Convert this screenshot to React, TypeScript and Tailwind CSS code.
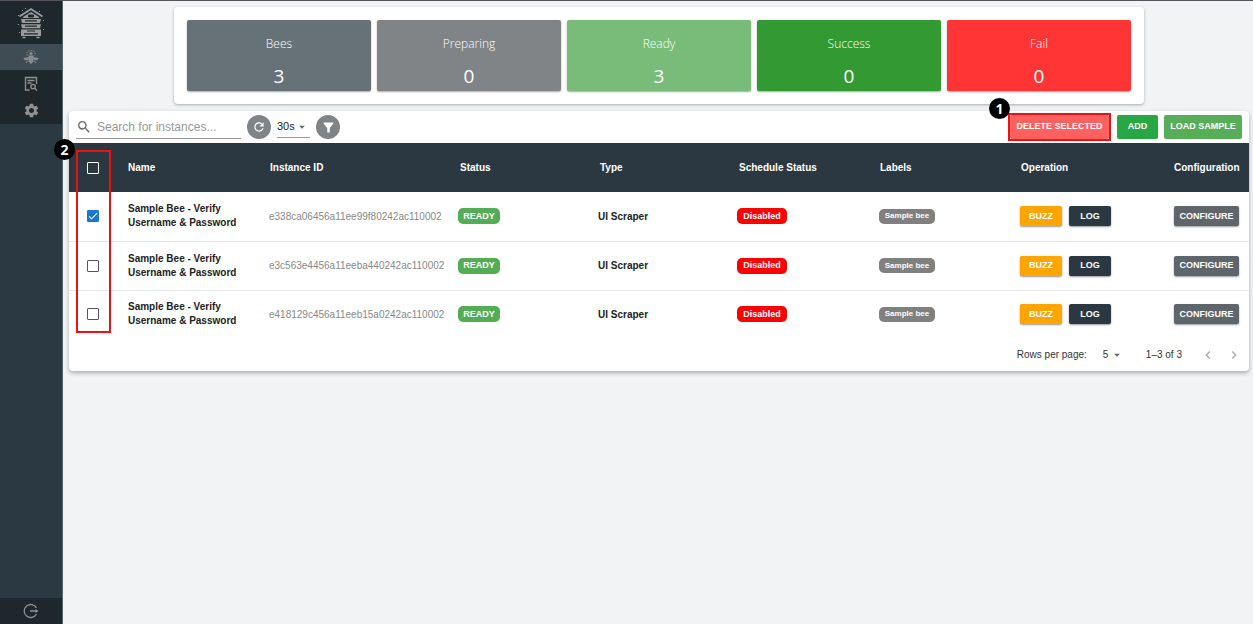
import { useState } from "react";
import {
  MdArrowDropDown,
  MdCheck,
  MdChevronLeft,
  MdChevronRight,
  MdFilterAlt,
  MdRefresh,
  MdSearch,
  MdSettings,
} from "react-icons/md";

const stats = [
  { label: "Bees", value: 3, color: "bg-[#677278]" },
  { label: "Preparing", value: 0, color: "bg-[#808487]" },
  { label: "Ready", value: 3, color: "bg-[#79bc7a]" },
  { label: "Success", value: 0, color: "bg-[#339933]" },
  { label: "Fail", value: 0, color: "bg-[#ff3434]" },
];

const instances = [
  "e338ca06456a11ee99f80242ac110002",
  "e3c563e4456a11eeba440242ac110002",
  "e418129c456a11eeb15a0242ac110002",
];

const columns = [
  "Name",
  "Instance ID",
  "Status",
  "Type",
  "Schedule Status",
  "Labels",
  "Operation",
  "Configuration",
];

const HiveLogo = () => (
  <svg width="28" height="32" viewBox="0 0 28 32" fill="none" stroke="#9a9c9d">
    <path d="M2.500 9.500 14 2l11.500 7.500" strokeWidth="1.800" />
    <path d="M6 10 14 5l8 5v1H6z" fill="#9a9c9d" stroke="none" />
    <path d="M11.500 8h5v2h-5z" fill="#1e282c" stroke="#1e282c" strokeWidth="1" />
    <path d="M4 12h20l-1 4H5zM4 17.300h20l-1 4H5zM4 22.600h20V29H4z" fill="#9a9c9d" stroke="none" />
    <path d="M8 13.800h12M8 19.200h12M7 26.800h14" stroke="#1e282c" strokeWidth="1.200" />
    <path d="M10 24h8" stroke="#1e282c" strokeWidth="1" />
    <path d="M5.500 30.500h3M19.500 30.500h3" strokeWidth="1.400" />
    <path
      d="M5 3.500h1M8 1.500h1M22 4.500h1M1 8.500h1M1 17.500h1M2 25.500h1M26 13.500h1M26 22.500h1"
      strokeWidth="1"
    />
  </svg>
);

const BeeIcon = () => (
  <svg width="16" height="16" viewBox="0 0 16 16" fill="none" stroke="#888d91">
    <path d="M4.500 6.500C2.500 3.500 5 2 8 1.500c3 .5 5.500 2 3.500 5" strokeDasharray="1.500 1" />
    <circle cx="8" cy="4.500" r="1.500" fill="#888d91" stroke="none" />
    <path d="M5.500 6.500h5v6L8 15l-2.500-2.500z" fill="#888d91" stroke="none" />
    <path d="M6 8 .5 9c.5 2.500 3 3 5 1.500zM10 8l5.500 1c-.5 2.500-3 3-5 1.500z" fill="#888d91" stroke="none" />
    <path d="M4.500 12 3 14M11.500 12l1.500 2" />
  </svg>
);

const ReportIcon = () => (
  <svg width="14" height="16" viewBox="0 0 14 16" fill="none" stroke="#8f9293" strokeWidth="1.300">
    <path d="M5.500 14H1.500V1.500h11V8M3.500 4.500h7M3.500 7h4" />
    <circle cx="9" cy="10.500" r="2.200" />
    <path d="m10.700 12.200 2.300 2.300" />
  </svg>
);

const LogoutIcon = () => (
  <svg width="16" height="16" viewBox="0 0 16 16" fill="none" stroke="#8f9293" strokeWidth="1.300">
    <path d="M13.500 5A6.500 6.500 0 1 0 13.500 11M7 8h7" />
    <path d="M12.500 6 15.500 8l-3 2z" fill="#8f9293" stroke="none" />
  </svg>
);

const Sidebar = () => (
  <aside className="flex w-[63px] shrink-0 flex-col border-r border-[#55636a] bg-[#2b3a42]">
    <a href="#home" aria-label="Home" className="flex h-[43px] items-center justify-center bg-[#1e282c]">
      <HiveLogo />
    </a>
    <nav>
      <a href="#bees" aria-label="Bees" className="flex h-[26px] items-center justify-center bg-[#404c54]">
        <BeeIcon />
      </a>
      <a href="#reports" aria-label="Reports" className="flex h-[27px] items-center justify-center bg-[#1e282c]">
        <ReportIcon />
      </a>
      <a href="#settings" aria-label="Settings" className="flex h-[27px] items-center justify-center bg-[#1e282c]">
        <MdSettings size={17} color="#8f9293" />
      </a>
    </nav>
    <button aria-label="Log out" className="mt-auto flex h-[26px] items-center justify-center bg-[#1e282c]">
      <LogoutIcon />
    </button>
  </aside>
);

type CheckboxProps = {
  label: string;
  checked: boolean;
  onChange: () => void;
  light?: boolean;
};

const Checkbox = ({ label, checked, onChange, light }: CheckboxProps) => (
  <span className="ml-[18px] grid size-3 place-items-center">
    <input
      type="checkbox"
      aria-label={label}
      checked={checked}
      onChange={onChange}
      className={`col-start-1 row-start-1 size-3 appearance-none rounded-[1px] border checked:border-[#1976d2] checked:bg-[#1976d2] ${
        light ? "border-white" : "border-[#555555]"
      }`}
    />
    {checked && (
      <MdCheck size={12} color="white" className="pointer-events-none col-start-1 row-start-1" />
    )}
  </span>
);

const Marker = ({ children, className }: { children: string; className: string }) => (
  <span
    className={`absolute flex size-[21px] items-center justify-center rounded-full bg-black font-['Open_Sans',sans-serif] text-[14px] font-bold text-white ${className}`}
  >
    {children}
  </span>
);

const App = () => {
  const [search, setSearch] = useState("");
  const [selected, setSelected] = useState<string[]>([instances[0]]);

  const toggle = (id: string) =>
    setSelected(
      selected.includes(id) ? selected.filter((s) => s !== id) : [...selected, id]
    );

  const allSelected = selected.length === instances.length;

  return (
    <div className="flex min-h-screen border-t border-[#55555a] bg-[#f2f3f5] font-['Liberation_Sans',Arial,sans-serif] text-[#222222]">
      <Sidebar />
      <main className="min-w-0 flex-1 pt-[6px] pr-1 pl-[6px]">
        <section className="mx-auto grid max-w-[970px] grid-cols-5 gap-[6px] rounded-sm bg-white p-[13px] shadow-[0_1px_3px_rgba(0,0,0,0.3)]">
          {stats.map((stat) => (
            <div
              key={stat.label}
              className={`flex h-[71px] flex-col items-center rounded-xs pt-3 font-['Open_Sans',sans-serif] text-white shadow-[0_1px_2px_rgba(0,0,0,0.35)] ${stat.color}`}
            >
              <span className="text-[12px] leading-6 font-light">{stat.label}</span>
              <span className="mt-1 text-[19px] leading-8">{stat.value}</span>
            </div>
          ))}
        </section>

        <section className="relative mt-[7px] rounded-sm bg-white shadow-[0_2px_4px_rgba(0,0,0,0.3)]">
          <div className="flex h-8 items-center pr-[7px] pl-[7px]">
            <label className="flex h-[23px] w-[165px] items-center gap-[5px] border-b border-[#999999]">
              <MdSearch size={16} color="#666666" className="shrink-0" />
              <input
                type="text"
                aria-label="Search for instances"
                placeholder="Search for instances..."
                value={search}
                onChange={(e) => setSearch(e.target.value)}
                className="w-full min-w-0 text-[12px] outline-none placeholder:text-[#999999]"
              />
            </label>
            <button
              aria-label="Refresh"
              className="ml-[6px] flex size-6 items-center justify-center rounded-full bg-[#808487] text-white"
            >
              <MdRefresh size={14} />
            </button>
            <div className="ml-[6px] flex h-[22px] w-[33px] items-center border-b border-[#999999]">
              <select aria-label="Refresh interval" className="w-[18px] appearance-none text-[11px]">
                <option>30s</option>
              </select>
              <MdArrowDropDown size={14} color="#666666" className="pointer-events-none shrink-0" />
            </div>
            <button
              aria-label="Filter"
              className="ml-[6px] flex size-6 items-center justify-center rounded-full bg-[#808487] text-white"
            >
              <MdFilterAlt size={15} />
            </button>

            <div className="ml-auto flex items-center gap-[6px] text-[9px] font-bold text-white">
              <div className="relative border-2 border-[#ee1111]">
                <button className="block h-6 w-[99px] rounded-xs bg-[#ff6060] whitespace-nowrap">
                  DELETE SELECTED
                </button>
                <Marker className="-top-[17px] -left-[21px]">1</Marker>
              </div>
              <button className="h-6 w-[41px] rounded-xs bg-[#28a745]">ADD</button>
              <button className="h-6 w-[78px] rounded-xs bg-[#57ad58] whitespace-nowrap">
                LOAD SAMPLE
              </button>
            </div>
          </div>

          <table className="w-full table-fixed text-left text-[10px]">
            <colgroup>
              <col className="w-[47px]" />
              <col className="w-[142px]" />
              <col className="w-[190px]" />
              <col className="w-[140px]" />
              <col className="w-[139px]" />
              <col className="w-[141px]" />
              <col className="w-[141px]" />
              <col className="w-[153px]" />
              <col className="w-[87px]" />
            </colgroup>
            <thead>
              <tr className="h-[49px] bg-[#2b3841] text-white">
                <th>
                  <Checkbox
                    light
                    label="Select all"
                    checked={allSelected}
                    onChange={() => setSelected(allSelected ? [] : instances)}
                  />
                </th>
                {columns.map((column) => (
                  <th key={column} className="pl-3 whitespace-nowrap">
                    {column}
                  </th>
                ))}
              </tr>
            </thead>
            <tbody>
              {instances.map((id) => (
                <tr key={id} className="h-[49px] border-b border-[#e8e8e8] last:h-12 last:border-0">
                  <td>
                    <Checkbox
                      label={`Select ${id}`}
                      checked={selected.includes(id)}
                      onChange={() => toggle(id)}
                    />
                  </td>
                  <td className="pl-3 leading-[14px] font-bold">
                    Sample Bee - Verify Username &amp; Password
                  </td>
                  <td className="pl-[11px] text-[#888888]">{id}</td>
                  <td className="pl-[10px]">
                    <span className="flex h-4 w-[42px] items-center justify-center rounded-[5px] bg-[#54ad56] text-[9px] font-bold text-white">
                      READY
                    </span>
                  </td>
                  <td className="pl-[10px] font-bold">UI Scraper</td>
                  <td className="pl-[10px]">
                    <span className="flex h-4 w-[50px] items-center justify-center rounded-[5px] bg-[#ff0000] text-[9px] font-bold text-white">
                      Disabled
                    </span>
                  </td>
                  <td className="pl-[11px]">
                    <span className="flex h-[15px] w-14 items-center justify-center rounded-[5px] bg-[#808080] text-[8px] font-bold text-white">
                      Sample bee
                    </span>
                  </td>
                  <td className="pl-[11px]">
                    <div className="flex gap-[7px] text-[9px] font-bold text-white">
                      <button className="h-5 w-[42px] rounded-xs bg-[#ffa500] shadow-[0_1px_2px_rgba(0,0,0,0.4)]">
                        BUZZ
                      </button>
                      <button className="h-5 w-[42px] rounded-xs bg-[#2b3841] shadow-[0_1px_2px_rgba(0,0,0,0.4)]">
                        LOG
                      </button>
                    </div>
                  </td>
                  <td className="pl-3">
                    <button className="h-5 w-[65px] rounded-xs bg-[#5e656b] text-[9px] font-bold text-white shadow-[0_1px_2px_rgba(0,0,0,0.4)]">
                      CONFIGURE
                    </button>
                  </td>
                </tr>
              ))}
            </tbody>
          </table>

          <div className="flex h-[33px] items-center justify-end pr-[7px] text-[10px] text-[#333333]">
            <label htmlFor="rows">Rows per page:</label>
            <select id="rows" className="ml-4 w-[7px] appearance-none">
              <option>5</option>
            </select>
            <MdArrowDropDown size={14} color="#666666" className="pointer-events-none" />
            <span className="ml-[22px]">1–3 of 3</span>
            <button aria-label="Previous page" className="ml-[18px] text-[#aaaaaa]">
              <MdChevronLeft size={16} />
            </button>
            <button aria-label="Next page" className="ml-[10px] text-[#aaaaaa]">
              <MdChevronRight size={16} />
            </button>
          </div>

          <div className="pointer-events-none absolute top-[39px] left-[7px] h-[183px] w-[35px] border-2 border-[#ee1111]" />
          <Marker className="top-7 -left-[15px]">2</Marker>
        </section>
      </main>
    </div>
  );
};

export default App;
